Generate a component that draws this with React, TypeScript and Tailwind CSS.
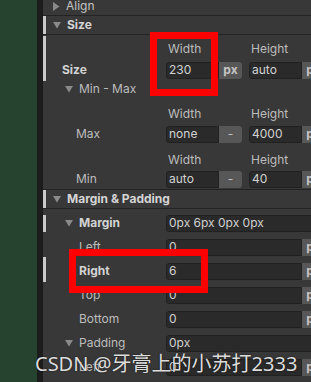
import React from "react";

function TriDown() {
  return (
    <svg width="8" height="7" viewBox="0 0 8 7" className="shrink-0">
      <polygon points="0,0 8,0 4,6.5" fill="#8a8a8a" />
    </svg>
  );
}

function TriRight() {
  return (
    <svg width="7" height="9" viewBox="0 0 7 9" className="shrink-0">
      <polygon points="0,0 6.5,4.5 0,9" fill="#8a8a8a" />
    </svg>
  );
}

function Marker({ on, className = "" }: { on?: boolean; className?: string }) {
  return <div className={`w-[3px] shrink-0 ${on ? "bg-[#c9c9c9]" : ""} ${className}`} />;
}

function Field({ value, btn, w }: { value: string; btn?: string; w: number }) {
  return (
    <div className="flex h-[17px] shrink-0">
      <div
        className={`flex items-center h-full bg-[#2a2a2a] border border-[#212121] pl-[2px] text-[12px] text-[#d2d2d2] ${btn ? "rounded-l-[3px]" : "rounded-[3px]"}`}
        style={{ width: w }}
      >
        {value}
      </div>
      {btn !== undefined && (
        <div className={`flex items-center justify-center w-[23px] h-full bg-[#575757] rounded-r-[3px] text-[12px] text-[#c4c4c4] ${btn === "-" ? "font-normal" : "font-bold"}`}>
          {btn}
        </div>
      )}
    </div>
  );
}

function Header({ label, h, on }: { label: string; h: string; on?: boolean }) {
  return (
    <div className={`flex ${h} border-b border-[#232323]`}>
      <Marker on={on} />
      <div className="flex items-center gap-[6px] pl-[7px] text-[12px] font-bold text-[#d4d4d4]">
        <TriDown />
        {label}
      </div>
    </div>
  );
}

function SizeBlock({ label, labelCls, w, h, pt, gap, on }: { label: string; labelCls: string; w: [string, string]; h: [string, string]; pt: string; gap: string; on?: boolean }) {
  return (
    <div className="flex">
      <Marker on={on} />
      <div className={`flex-1 ${pt}`}>
        <div className="flex h-[14px] items-center text-[12px] text-[#bdbdbd]">
          <div className="w-[122px] shrink-0" />
          <div className="w-[83px] shrink-0">Width</div>
          <div>Height</div>
        </div>
        <div className={`flex ${gap} items-center`}>
          <div className={`w-[120px] shrink-0 text-[12px] ${labelCls}`}>{label}</div>
          <Field value={w[0]} btn={w[1]} w={53} />
          <div className="w-[7px] shrink-0" />
          <Field value={h[0]} btn={h[1]} w={53} />
        </div>
      </div>
    </div>
  );
}

function PropRow({ label, value, btn, w, bold, indent = "pl-[33px]", children, marker }: { label?: string; value: string; btn?: string; w: number; bold?: boolean; indent?: string; children?: React.ReactNode; marker?: string }) {
  return (
    <div className="flex h-[24px] items-center">
      <Marker on={!!marker} className={marker} />
      <div className={`w-[120px] shrink-0 flex items-center text-[12px] ${indent} ${bold ? "font-bold text-[#d2d2d2]" : "text-[#bdbdbd]"}`}>
        {children}
        {label}
      </div>
      <Field value={value} btn={btn} w={w} />
    </div>
  );
}

export default function App() {
  return (
    <div className="relative flex w-[311px] h-[382px] overflow-hidden font-[Inter,'Noto_Sans',sans-serif] bg-[#383838]">
      <div className="w-[37px] shrink-0 bg-[#26432f]" />
      <div className="w-[6px] shrink-0 bg-[#1c1c1c]" />
      <div className="flex-1 flex flex-col bg-[#383838] min-w-0">
        <div className="flex h-[16px] border-b border-[#232323]">
          <Marker />
          <div className="flex items-center gap-[6px] pl-[7px] -mt-[3px] text-[12px] text-[#c4c4c4]">
            <TriRight />
            Align
          </div>
        </div>
        <Header label="Size" h="h-[21px]" on />
        <div className="flex flex-col pt-[1px]">
          <SizeBlock label="Size" labelCls="pl-[16px] font-bold text-[#d2d2d2]" w={["230", "px"]} h={["auto", "px"]} pt="pt-[6px]" gap="mt-[5px] mb-[2px]" on />
          <div className="flex h-[16px]">
            <Marker />
            <div className="flex items-center gap-[6px] pl-[19px] text-[12px] text-[#bdbdbd]">
              <TriDown />
              Min - Max
            </div>
          </div>
          <SizeBlock label="Max" labelCls="pl-[30px] text-[#bdbdbd]" w={["none", "-"]} h={["4000", "px"]} pt="pt-[10px]" gap="mt-[4px]" />
          <SizeBlock label="Min" labelCls="pl-[30px] text-[#bdbdbd]" w={["auto", "-"]} h={["40", "px"]} pt="pt-[10px]" gap="mt-[3px]" />
        </div>
        <div className="border-b border-[#232323] mt-[1px]" />
        <Header label="Margin & Padding" h="h-[19px]" on />
        <div className="flex flex-col pt-[2px]">
          <PropRow value="0px 6px 0px 0px" w={170} bold indent="pl-[19px]" marker="bg-[#c9c9c9] h-[17px]">
            <span className="mr-[6px]"><TriDown /></span>
            Margin
          </PropRow>
          <PropRow label="Left" value="0" btn="px" w={136} />
          <PropRow label="Right" value="6" btn="px" w={136} bold marker="bg-[#c9c9c9] h-[25px] -mt-[3px]" />
          <PropRow label="Top" value="0" btn="px" w={136} />
          <PropRow label="Bottom" value="0" btn="px" w={136} />
          <PropRow value="0px" w={170} indent="pl-[19px]">
            <span className="mr-[6px]"><TriDown /></span>
            Padding
          </PropRow>
          <PropRow label="Left" value="0" btn="px" w={136} />
          <PropRow label="Right" value="0" btn="px" w={136} />
        </div>
      </div>

      <div className="absolute left-[150px] top-[32px] w-[68px] h-[64px] border-[7px] border-[#ff0000]" />
      <div className="absolute left-[69px] top-[249px] w-[139px] h-[44px] border-[7px] border-[#ff0000]" />

      <div className="absolute left-[35px] top-[353px] leading-[21px] text-[20px] text-[#dcdcdc] font-['Noto_Sans','Noto_Sans_CJK_SC',sans-serif] [text-shadow:0_0_2px_rgba(0,0,0,0.6)] whitespace-nowrap">
        CSDN @牙膏上的小苏打2333
      </div>
    </div>
  );
}
